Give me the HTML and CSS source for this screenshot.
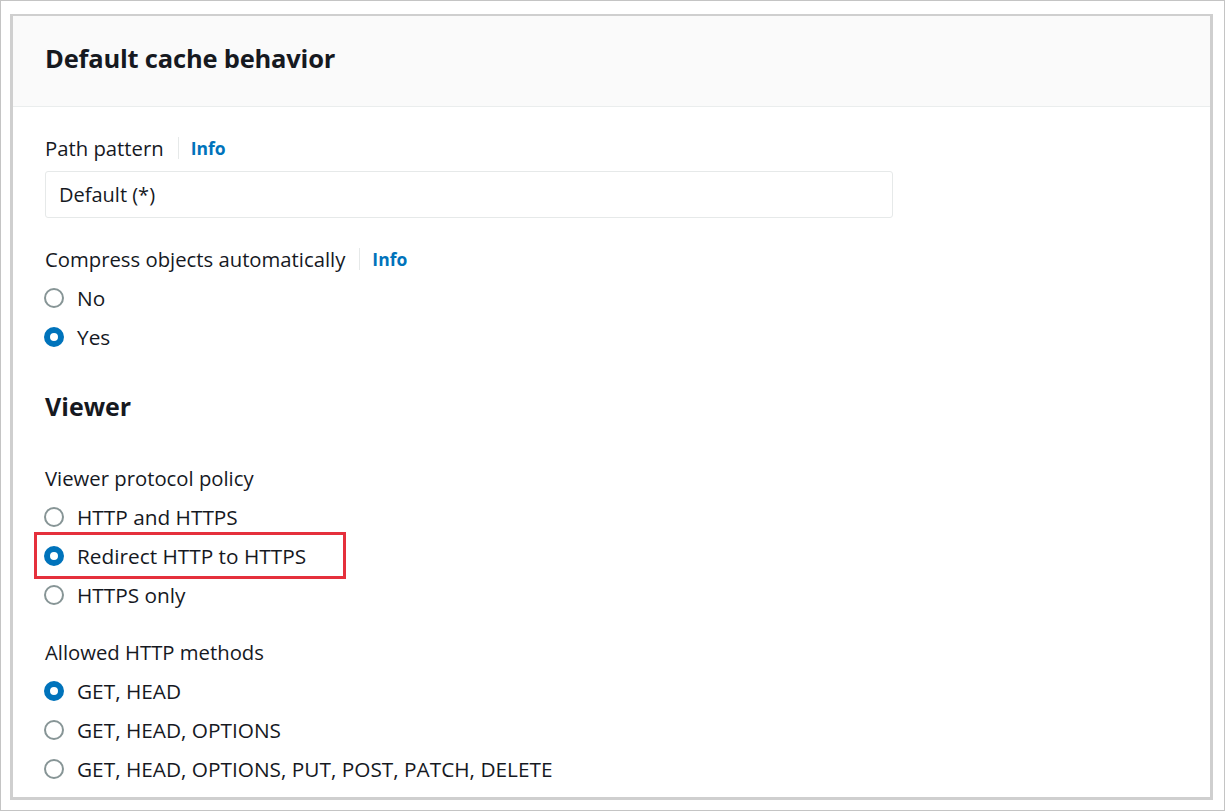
FILE: index.html
```html
<!DOCTYPE html>
<html>
<head>
<meta charset="utf-8">
<link rel="stylesheet" href="styles.css">
</head>
<body>
<div class="frame">
  <div class="card">
    <div class="card-header"><h2>Default cache behavior</h2></div>
    <div class="card-body">
      <div class="field field-path">
        <div class="label">Path pattern <span class="sep"></span><a class="info">Info</a></div>
        <div class="input">Default (*)</div>
      </div>
      <div class="field field-compress">
        <div class="label">Compress objects automatically <span class="sep"></span><a class="info">Info</a></div>
        <div class="radios">
          <div class="radio"><span class="dot"></span>No</div>
          <div class="radio"><span class="dot on"></span>Yes</div>
        </div>
      </div>
      <h3 class="section">Viewer</h3>
      <div class="field field-policy">
        <div class="label">Viewer protocol policy</div>
        <div class="radios">
          <div class="radio"><span class="dot"></span>HTTP and HTTPS</div>
          <div class="radio highlight"><span class="dot on"></span>Redirect HTTP to HTTPS</div>
          <div class="radio"><span class="dot"></span>HTTPS only</div>
        </div>
      </div>
      <div class="field">
        <div class="label">Allowed HTTP methods</div>
        <div class="radios">
          <div class="radio"><span class="dot on"></span>GET, HEAD</div>
          <div class="radio"><span class="dot"></span>GET, HEAD, OPTIONS</div>
          <div class="radio"><span class="dot"></span>GET, HEAD, OPTIONS, PUT, POST, PATCH, DELETE</div>
        </div>
      </div>
    </div>
  </div>
</div>
</body>
</html>
```
FILE: styles.css
```css
html, body {
  margin: 0;
  padding: 0;
  background: #ffffff;
}
body {
  font-family: "Open Sans", "Noto Sans", sans-serif;
  color: #16191f;
}
.frame {
  width: 1225px;
  height: 811px;
  box-sizing: border-box;
  border: 1px solid #c4c4c4;
  padding: 13px 11px 0 9px;
  overflow: hidden;
}
.card {
  height: 786px;
  border-top: 2px solid #cfcfcf;
  border-left: 3px solid #cfcfcf;
  border-right: 3px solid #cfcfcf;
  border-bottom: 3px solid #cfcfcf;
  box-sizing: border-box;
  background: #fff;
}
.card-header {
  background: #fafafa;
  height: 91px;
  border-bottom: 1px solid #eaeded;
  display: flex;
  align-items: center;
  padding: 0 0 6px 32px;
  box-sizing: border-box;
}
.card-header h2 {
  margin: 0;
  font-size: 25.5px;
  line-height: 32px;
  font-weight: 700;
  letter-spacing: -0.2px;
}
.card-body {
  padding: 28px 32px 0 32px;
}
.field-path {
  margin-bottom: 28px;
}
.field-policy {
  margin-bottom: 25px;
}
.label {
  font-size: 20.3px;
  line-height: 26px;
  display: flex;
  align-items: center;
}
.sep {
  display: inline-block;
  width: 1px;
  height: 22px;
  background: #e6e9e9;
  margin: 0 12px 0 14px;
}
.info {
  color: #0073bb;
  font-weight: 700;
  font-size: 17.5px;
}
.input {
  margin-top: 10px;
  width: 848px;
  height: 47px;
  box-sizing: border-box;
  border: 1px solid #e6e9e9;
  border-radius: 3px;
  display: flex;
  align-items: center;
  padding-left: 13px;
  font-size: 20px;
}
.radios {
  margin-top: 6px;
}
.radio {
  display: flex;
  align-items: center;
  height: 39px;
  font-size: 20.8px;
}
.dot {
  width: 20px;
  height: 20px;
  border-radius: 50%;
  border: 2px solid #879596;
  box-sizing: border-box;
  margin-left: -1px;
  margin-right: 13px;
  flex: none;
}
.dot.on {
  border: 6.5px solid #0073bb;
}
.highlight {
  position: relative;
}
.highlight::after {
  content: "";
  position: absolute;
  left: -11px;
  top: -4px;
  width: 312px;
  height: 47px;
  box-sizing: border-box;
  border: 3px solid #e5303c;
  pointer-events: none;
}
.section {
  margin: 35px 0 44px 0;
  font-size: 25px;
  line-height: 30px;
  font-weight: 700;
}
```
